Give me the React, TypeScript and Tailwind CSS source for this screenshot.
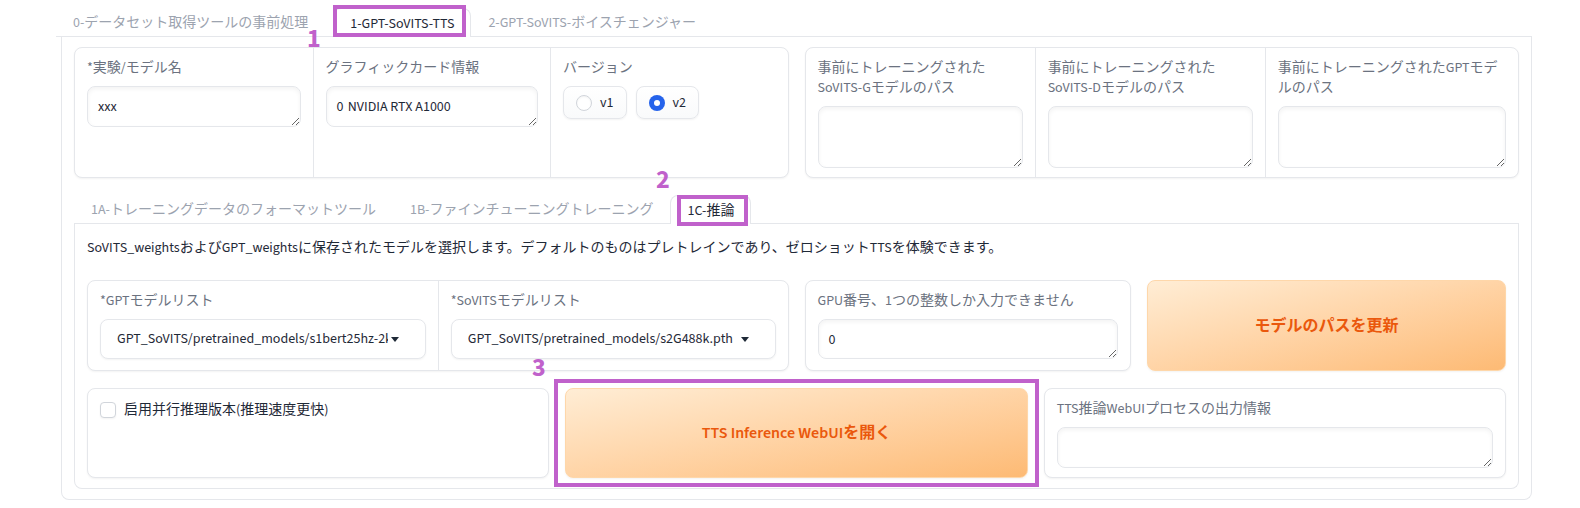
import React from 'react';

const inputCls =
  "block w-full rounded-lg border border-[#e5e7eb] bg-white px-[10px] py-[10px] text-sm leading-5 text-[#1f2937] shadow-[inset_0_2px_4px_0_rgba(0,0,0,0.05)] outline-none";

function Label({ children }: { children: React.ReactNode }) {
  return <span className="block mb-2 whitespace-nowrap text-sm leading-5 text-[#6b7280]">{children}</span>;
}

function Caret() {
  return (
    <svg width="8" height="5" viewBox="0 0 8 5">
      <path d="M0 0h8L4 5z" fill="#1f2937" />
    </svg>
  );
}

function Dropdown({ value }: { value: string }) {
  return (
    <div className="flex h-10 items-center rounded-lg border border-[#e5e7eb] bg-white pl-4 pr-[26px] shadow-[0_1px_2px_0_rgba(0,0,0,0.05)]">
      <div className="flex-1 overflow-hidden whitespace-nowrap text-sm leading-5 text-[#1f2937]">{value}</div>
      <span className="ml-[3px] flex items-center">
        <Caret />
      </span>
    </div>
  );
}

function Tab({ label, selected, wide }: { label: string; selected?: boolean; wide?: boolean }) {
  if (selected) {
    return (
      <div className="relative -mb-px flex h-[29px] items-center rounded-t-lg border border-b-0 border-[#e5e7eb] bg-white px-4 pt-px text-sm leading-5 text-[#1f2937] whitespace-nowrap">
        {label}
      </div>
    );
  }
  return (
    <div
      className={
        wide
          ? "-mb-px flex h-[29px] items-center border border-transparent pl-4 pr-6 pt-px text-sm leading-5 text-[#9ca3af] whitespace-nowrap"
          : "-mb-px flex h-[29px] items-center border border-transparent px-4 pt-px text-sm leading-5 text-[#9ca3af] whitespace-nowrap"
      }
    >
      {label}
    </div>
  );
}

function Radio({ label, checked }: { label: string; checked?: boolean }) {
  return (
    <div className="flex h-[33px] items-center gap-2 rounded-lg border border-[#e5e7eb] bg-gradient-to-t from-[#f9fafb] to-white px-3 shadow-[0_1px_2px_0_rgba(0,0,0,0.05)]">
      {checked ? (
        <span className="flex h-4 w-4 items-center justify-center rounded-full bg-[#2563eb]">
          <span className="h-[6px] w-[6px] rounded-full bg-white" />
        </span>
      ) : (
        <span className="h-4 w-4 rounded-full border border-[#d1d5db] bg-white shadow-[inset_0_1px_2px_rgba(0,0,0,0.05)]" />
      )}
      <span className="text-sm leading-5 text-[#1f2937]">{label}</span>
    </div>
  );
}

const groupCls =
  "rounded-lg border border-[#e5e7eb] bg-white shadow-[0_1px_2px_0_rgba(0,0,0,0.05)] overflow-hidden";

const btnCls =
  "flex items-center justify-center rounded-lg border border-[#fed7aa] bg-gradient-to-br from-[#ffedd5] to-[#fdba74] text-base font-semibold text-[#ea580c] shadow-[0_1px_2px_0_rgba(0,0,0,0.05)]";

export default function App() {
  return (
    <div className="relative h-[508px] w-[1580px] overflow-hidden bg-white font-['Source_Sans_3','Noto_Sans_CJK_JP',sans-serif]">
      <div className="ml-[56px] w-[1476px] pt-[8px]">
        {/* top tabs */}
        <div className="flex border-b border-[#e5e7eb]">
          <Tab label="0-データセット取得ツールの事前処理" wide />
          <Tab label="1-GPT-SoVITS-TTS" selected />
          <Tab label="2-GPT-SoVITS-ボイスチェンジャー" />
        </div>
        {/* outer panel */}
        <div className="ml-[5px] rounded-b-lg border-x border-b border-[#e5e7eb] px-3 pb-[10px] pt-[10px]">
          {/* top row */}
          <div className="grid grid-cols-2 gap-4">
            <div className={groupCls + " grid h-[131px] grid-cols-3"}>
              <div className="px-3 pt-[10px]">
                <Label>*実験/モデル名</Label>
                <textarea readOnly defaultValue="xxx" className={inputCls + " h-[41px]"} />
              </div>
              <div className="border-l border-[#e5e7eb] px-3 pt-[10px]">
                <Label>グラフィックカード情報</Label>
                <textarea readOnly defaultValue="0	NVIDIA RTX A1000" className={inputCls + " h-[41px]"} />
              </div>
              <div className="border-l border-[#e5e7eb] px-3 pt-[10px]">
                <Label>バージョン</Label>
                <div className="flex gap-[9px]">
                  <Radio label="v1" />
                  <Radio label="v2" checked />
                </div>
              </div>
            </div>
            <div className={groupCls + " grid h-[131px] grid-cols-[228fr_229fr_252fr]"}>
              <div className="px-3 pt-[10px]">
                <Label>
                  事前にトレーニングされた
                  <br />
                  SoVITS-Gモデルのパス
                </Label>
                <textarea readOnly className={inputCls + " h-[62px]"} />
              </div>
              <div className="border-l border-[#e5e7eb] px-3 pt-[10px]">
                <Label>
                  事前にトレーニングされた
                  <br />
                  SoVITS-Dモデルのパス
                </Label>
                <textarea readOnly className={inputCls + " h-[62px]"} />
              </div>
              <div className="border-l border-[#e5e7eb] px-3 pt-[10px]">
                <Label>
                  事前にトレーニングされたGPTモデ
                  <br />
                  ルのパス
                </Label>
                <textarea readOnly className={inputCls + " h-[62px]"} />
              </div>
            </div>
          </div>

          {/* second tabs */}
          <div className="mt-4 flex border-b border-[#e5e7eb] pt-px">
            <Tab label="1A-トレーニングデータのフォーマットツール" />
            <Tab label="1B-ファインチューニングトレーニング" />
            <Tab label="1C-推論" selected />
          </div>
          <div className="rounded-b-lg border-x border-b border-[#e5e7eb] px-3 pb-[10px] pt-[14px]">
            <p className="text-sm leading-5 text-[#1f2937] whitespace-nowrap">
              SoVITS_weightsおよびGPT_weightsに保存されたモデルを選択します。デフォルトのものはプレトレインであり、ゼロショットTTSを体験できます。
            </p>
            {/* row 1 */}
            <div className="mt-[22px] grid h-[91px] grid-cols-2 gap-4">
              <div className={groupCls + " grid grid-cols-2"}>
                <div className="px-3 pt-[10px]">
                  <Label>*GPTモデルリスト</Label>
                  <Dropdown value="GPT_SoVITS/pretrained_models/s1bert25hz-2kh-longer-epoch=68e-step=50232.ckpt" />
                </div>
                <div className="border-l border-[#e5e7eb] px-3 pt-[10px]">
                  <Label>*SoVITSモデルリスト</Label>
                  <Dropdown value="GPT_SoVITS/pretrained_models/s2G488k.pth" />
                </div>
              </div>
              <div className="grid grid-cols-[327fr_359fr] gap-4">
                <div className={groupCls + " px-3 pt-[10px]"}>
                  <Label>GPU番号、1つの整数しか入力できません</Label>
                  <textarea readOnly defaultValue="0" className={inputCls + " h-10"} />
                </div>
                <div className={btnCls}>モデルのパスを更新</div>
              </div>
            </div>
            {/* row 2 */}
            <div className="mt-[17px] grid h-[90px] grid-cols-3 gap-4">
              <div className={groupCls + " px-3 pt-[11px]"}>
                <label className="flex h-5 items-center gap-2">
                  <span className="h-4 w-4 rounded-[4px] border border-[#d1d5db] bg-white shadow-[0_1px_2px_0_rgba(0,0,0,0.05)]" />
                  <span className="text-sm leading-5 text-[#1f2937]">启用并行推理版本(推理速度更快)</span>
                </label>
              </div>
              <div className={btnCls}>TTS Inference WebUIを開く</div>
              <div className={groupCls + " px-3 pt-[10px]"}>
                <Label>TTS推論WebUIプロセスの出力情報</Label>
                <textarea readOnly className={inputCls + " h-[41px]"} />
              </div>
            </div>
          </div>
        </div>
      </div>

      {/* annotations */}
      <div className="absolute left-[333px] top-[5px] h-[32px] w-[133px] border-4 border-[#c061cb]" />
      <div className="absolute left-[677px] top-[195px] h-[31px] w-[71px] border-4 border-[#c061cb]" />
      <div className="absolute left-[554px] top-[379px] h-[108px] w-[485px] border-4 border-[#c061cb]" />
      <span className="absolute left-[307px] top-[26px] text-[26px] font-bold leading-[26px] text-[#c061cb]">1</span>
      <span className="absolute left-[656px] top-[167px] text-[26px] font-bold leading-[26px] text-[#c061cb]">2</span>
      <span className="absolute left-[532px] top-[355px] text-[26px] font-bold leading-[26px] text-[#c061cb]">3</span>
    </div>
  );
}
